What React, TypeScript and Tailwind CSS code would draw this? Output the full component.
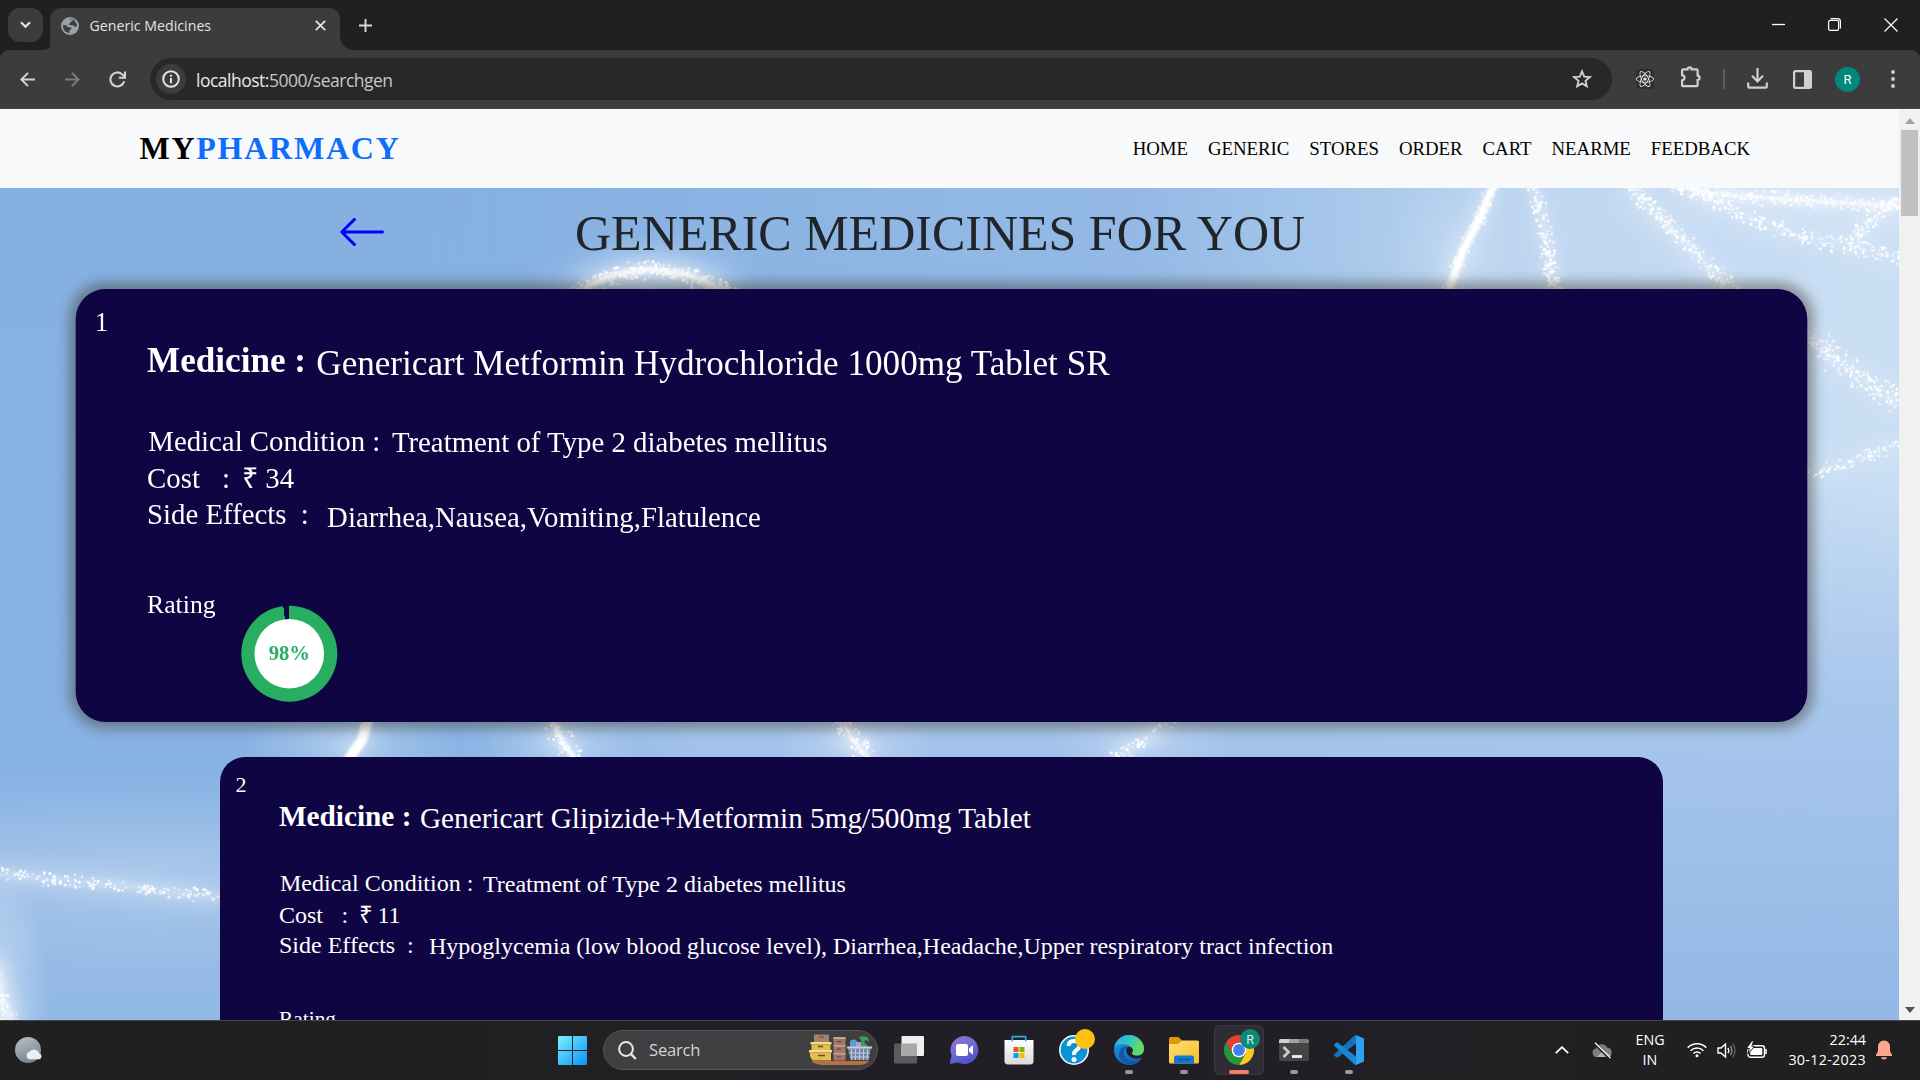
import type { ReactNode } from "react";
import { FaReact } from "react-icons/fa";

type Medicine = {
  name: string;
  condition: string;
  cost: number;
  sideEffects: string;
  rating: number;
};

const medicines: Medicine[] = [
  {
    name: "Genericart Metformin Hydrochloride 1000mg Tablet SR",
    condition: "Treatment of Type 2 diabetes mellitus",
    cost: 34,
    sideEffects: "Diarrhea,Nausea,Vomiting,Flatulence",
    rating: 98,
  },
  {
    name: "Genericart Glipizide+Metformin 5mg/500mg Tablet",
    condition: "Treatment of Type 2 diabetes mellitus",
    cost: 11,
    sideEffects:
      "Hypoglycemia (low blood glucose level), Diarrhea,Headache,Upper respiratory tract infection",
    rating: 96,
  },
];

const navLinks = ["HOME", "GENERIC", "STORES", "ORDER", "CART", "NEARME", "FEEDBACK"];

/* ---------- Backdrop of glowing particle strands ---------- */

type Point = [number, number];
type Strand = { points: Point[]; width: number; dots: number; glow: number; core?: number };

const strands: Strand[] = [
  { points: [[574, 296], [592, 284], [615, 274], [650, 269], [686, 274], [710, 284], [732, 296]], width: 11, dots: 330, glow: 0.9, core: 3 },
  { points: [[1494, 184], [1480, 218], [1464, 248], [1448, 292]], width: 8, dots: 120, glow: 0.7, core: 7 },
  { points: [[1533, 184], [1543, 220], [1550, 262], [1556, 292]], width: 9, dots: 150, glow: 0.5 },
  { points: [[1628, 184], [1662, 220], [1698, 256], [1736, 294]], width: 11, dots: 190, glow: 0.45 },
  { points: [[1672, 184], [1712, 194], [1800, 200], [1899, 206]], width: 9, dots: 270, glow: 0.6, core: 2 },
  { points: [[1690, 190], [1745, 217], [1800, 236], [1855, 248], [1899, 257]], width: 10, dots: 190, glow: 0.25 },
  { points: [[1899, 200], [1870, 222], [1848, 248]], width: 9, dots: 80, glow: 0.3 },
  { points: [[1806, 334], [1835, 360], [1866, 382], [1899, 403]], width: 16, dots: 160, glow: 0.25 },
  { points: [[1806, 476], [1840, 466], [1870, 454], [1899, 444]], width: 9, dots: 75, glow: 0.2 },
  { points: [[369, 716], [362, 740], [348, 760]], width: 5, dots: 20, glow: 0.8, core: 10 },
  { points: [[551, 716], [560, 738], [576, 760]], width: 13, dots: 60, glow: 0.6, core: 3 },
  { points: [[841, 716], [850, 736], [870, 760]], width: 13, dots: 60, glow: 0.6, core: 2 },
  { points: [[1170, 716], [1142, 742], [1110, 760]], width: 11, dots: 50, glow: 0.5 },
  { points: [[-4, 873], [50, 880], [110, 884], [165, 891], [224, 898]], width: 8, dots: 150, glow: 0.6 },
  { points: [[-8, 960], [0, 1000], [12, 1024]], width: 14, dots: 50, glow: 0.9 },
];

function makeRandom(seed: number) {
  let state = seed;
  return () => {
    state = (state * 1664525 + 1013904223) % 4294967296;
    return state / 4294967296;
  };
}

function toPath(points: Point[]) {
  return points.map(([x, y], i) => `${i === 0 ? "M" : "L"}${x} ${y}`).join(" ");
}

function scatter(strand: Strand, seed: number) {
  const random = makeRandom(seed);
  const segments = strand.points.length - 1;
  return Array.from({ length: strand.dots }, () => {
    const t = random() * segments;
    const i = Math.min(Math.floor(t), segments - 1);
    const f = t - i;
    const [x1, y1] = strand.points[i];
    const [x2, y2] = strand.points[i + 1];
    const length = Math.hypot(x2 - x1, y2 - y1) || 1;
    const spread = (random() + random() - 1) * strand.width;
    return {
      x: x1 + (x2 - x1) * f - ((y2 - y1) / length) * spread,
      y: y1 + (y2 - y1) * f + ((x2 - x1) / length) * spread,
      r: 0.9 + random() * 0.8,
      o: 0.45 + random() * 0.5,
    };
  });
}

const glowSpots: [number, number, number, number, number][] = [
  [650, 290, 120, 60, 0.5],
  [160, 885, 330, 100, 0.16],
  [-10, 1010, 60, 160, 0.6],
  [350, 745, 110, 50, 0.4],
  [560, 745, 80, 40, 0.35],
  [855, 745, 80, 40, 0.35],
  [1140, 740, 90, 40, 0.3],
  [1460, 260, 80, 90, 0.25],
  [1780, 200, 190, 60, 0.25],
];

function Backdrop() {
  return (
    <svg className="absolute inset-0 h-full w-full" viewBox="0 188 1899 832" preserveAspectRatio="none" aria-hidden="true">
      <defs>
        <linearGradient id="sky" x1="0" y1="0" x2="1" y2="0">
          <stop offset="0" stopColor="#84afe0" />
          <stop offset="0.35" stopColor="#8ab3e3" />
          <stop offset="0.6" stopColor="#94b9e6" />
          <stop offset="0.7" stopColor="#a6c7ea" />
          <stop offset="0.82" stopColor="#bfd6f1" />
          <stop offset="1" stopColor="#cbdff4" />
        </linearGradient>
        <linearGradient id="horizon" x1="0" y1="0" x2="0" y2="1">
          <stop offset="0" stopColor="#9ec1ea" stopOpacity="0" />
          <stop offset="0.35" stopColor="#9ec1ea" stopOpacity="0" />
          <stop offset="0.62" stopColor="#a6c5ec" stopOpacity="0.95" />
          <stop offset="1" stopColor="#93b8e6" />
        </linearGradient>
        <linearGradient id="low" x1="0" y1="0" x2="0" y2="1">
          <stop offset="0" stopColor="#86b0e1" />
          <stop offset="0.7" stopColor="#88b2e3" />
          <stop offset="0.81" stopColor="#9bbee7" />
          <stop offset="1" stopColor="#92b8e5" />
        </linearGradient>
        <linearGradient id="leftFade" x1="0" y1="0" x2="1" y2="0">
          <stop offset="0" stopColor="#fff" />
          <stop offset="0.6" stopColor="#fff" />
          <stop offset="1" stopColor="#000" />
        </linearGradient>
        <mask id="leftMask">
          <rect x="0" y="188" width="700" height="832" fill="url(#leftFade)" />
        </mask>
        <radialGradient id="spot">
          <stop offset="0" stopColor="#f4f9ff" />
          <stop offset="0.5" stopColor="#f4f9ff" stopOpacity="0.4" />
          <stop offset="1" stopColor="#f4f9ff" stopOpacity="0" />
        </radialGradient>
        <filter id="soft" filterUnits="userSpaceOnUse" x="-60" y="130" width="2040" height="950">
          <feGaussianBlur stdDeviation="10" />
        </filter>
        <filter id="near" filterUnits="userSpaceOnUse" x="-60" y="130" width="2040" height="950">
          <feGaussianBlur stdDeviation="3.5" />
        </filter>
        <filter id="fine" filterUnits="userSpaceOnUse" x="-60" y="130" width="2040" height="950">
          <feGaussianBlur stdDeviation="1.6" />
        </filter>
      </defs>
      <rect x="0" y="188" width="1899" height="832" fill="url(#sky)" />
      <rect x="0" y="188" width="1899" height="832" fill="url(#horizon)" />
      <rect x="0" y="188" width="700" height="832" fill="url(#low)" mask="url(#leftMask)" />
      {glowSpots.map(([cx, cy, rx, ry, o]) => (
        <ellipse key={`${cx}-${cy}`} cx={cx} cy={cy} rx={rx} ry={ry} fill="url(#spot)" opacity={o} />
      ))}
      {strands.map((s, i) => (
        <g key={i} fill="none" strokeLinejoin="round">
          <path d={toPath(s.points)} stroke="#fff" strokeWidth={s.width + 6} opacity={s.glow * 0.6} filter="url(#soft)" />
          <path d={toPath(s.points)} stroke="#fff" strokeWidth={s.width * 0.7} opacity={s.glow * 0.6} filter="url(#near)" />
          {s.core ? <path d={toPath(s.points)} stroke="#fff" strokeWidth={s.core} filter="url(#fine)" /> : null}
          {scatter(s, 97 + i * 131).map((d, j) => (
            <circle key={j} cx={d.x} cy={d.y} r={d.r} fill="#fff" opacity={d.o} />
          ))}
        </g>
      ))}
    </svg>
  );
}

/* ---------- Browser chrome ---------- */

function TabStrip() {
  return (
    <div className="flex h-[50px] items-end bg-[#1f2120]">
      <div className="mb-2 ml-2 flex h-[34px] w-[35px] items-center justify-center rounded-xl bg-[#3c3c3c]">
        <svg width="11" height="8" viewBox="0 0 11 8" fill="none" stroke="#e6e6e6" strokeWidth="2.2">
          <path d="M1 1.2 5.5 5.8 10 1.2" />
        </svg>
      </div>
      <svg width="10" height="10" viewBox="0 0 10 10" className="-mr-[3px] ml-0" fill="#3c3c3c">
        <path d="M10 0v10H0A10 10 0 0 0 10 0Z" />
      </svg>
      <div className="flex h-[42px] w-[290px] items-center rounded-t-[11px] bg-[#3c3c3c] pb-[7px] pl-[11px] pr-[14px]">
        <svg width="18" height="18" viewBox="0 0 18 18">
          <circle cx="9" cy="9" r="9" fill="#9aa0a6" />
          <path
            d="M2.2 7.8 5.6 8.4Q6.6 9 6.6 10.2L9.4 10.3Q10.6 10.6 10.4 12L8.4 13.2V15.9Q3.6 15.5 2.2 11ZM7 2.4 11.6 2.2Q12.4 3 11.6 4.1L9.6 4.4Q8.8 5 9.6 5.8L7.4 7.2Q9.6 8.6 12 8.2L13.4 9.6 15.8 9.4 15.9 8Q15.2 5.6 13.4 4L14 3.6 11 1.6Z"
            fill="#3c3c3c"
          />
        </svg>
        <span className="ml-[10.5px] flex-1 whitespace-nowrap font-['Open_Sans'] text-[14.2px] leading-5 text-[#e3e3e3]">
          Generic Medicines
        </span>
        <svg width="11" height="11" viewBox="0 0 11 11" stroke="#e3e3e3" strokeWidth="1.8">
          <path d="m.8.8 9.400 9.400M10.200.8.8 10.200" />
        </svg>
      </div>
      <svg width="14" height="14" viewBox="0 0 14 14" fill="#3c3c3c">
        <path d="M0 0v14h14A14 14 0 0 1 0 0Z" />
      </svg>
      <svg width="13" height="13" viewBox="0 0 13 13" className="mb-[18px] ml-[5px]" stroke="#d8d8d8" strokeWidth="1.9">
        <path d="M6.5 0v13M0 6.5h13" />
      </svg>
      <div className="ml-auto flex h-full items-center gap-[43px] pr-[22px] pb-[1px]">
        <svg width="13" height="13" viewBox="0 0 13 13" className="-ml-px mr-px" stroke="#fff" strokeWidth="1.3">
          <path d="M0 6.5h13" />
        </svg>
        <svg width="13" height="13" viewBox="0 0 13 13" className="-ml-px" fill="none" stroke="#fff" strokeWidth="1.2">
          <rect x=".6" y="2.4" width="10" height="10" rx="1.6" />
          <path d="M2.600.6h7q2.800 0 2.800 2.800v7" />
        </svg>
        <svg width="14" height="14" viewBox="0 0 14 14" stroke="#fff" strokeWidth="1.2">
          <path d="m.5.5 13 13m0-13-13 13" />
        </svg>
      </div>
    </div>
  );
}

function Toolbar() {
  return (
    <div className="bg-[#1f2120]">
      <div className="flex h-[59px] items-center rounded-t-[9px] border-b border-[#474747] bg-[#3c3c3c]">
        <svg width="15" height="15" viewBox="0 0 15 15" className="ml-5" fill="none" stroke="#d3d3d3" strokeWidth="2">
          <path d="M15 7.5H1.6M8 .9 1.4 7.5 8 14.1" />
        </svg>
        <svg width="15" height="15" viewBox="0 0 15 15" className="ml-[30px]" fill="none" stroke="#7d7d7d" strokeWidth="2">
          <path d="M0 7.5h13.4M7 .9l6.6 6.6L7 14.1" />
        </svg>
        <svg width="17" height="17" viewBox="0 0 17 17" className="ml-[29px]" fill="none" stroke="#d3d3d3" strokeWidth="2.1">
          <path d="M15.2 10.2A7 7 0 1 1 13.5 3.6L15.6 6" />
          <path d="M16 .5v6.2H9.8" />
        </svg>
        <div className="ml-6 flex h-[42px] w-[1462px] items-center rounded-full bg-[#282828] pl-1.5 pr-5">
          <span className="flex h-[30px] w-[30px] items-center justify-center rounded-full bg-[#3c3c3c]">
            <svg width="18" height="18" viewBox="0 0 18 18" fill="none" stroke="#e3e3e3" strokeWidth="2">
              <circle cx="9" cy="9" r="7.8" />
              <path d="M9 8v5.2M9 4.8v1.9" />
            </svg>
          </span>
          <span className="ml-2.5 mt-px whitespace-nowrap font-['Open_Sans'] text-[17.5px] leading-6 tracking-[-0.5px] text-[#c7c7c7]">
            <span className="text-[#e8e8e8]">localhost:</span>5000/searchgen
          </span>
          <svg width="20" height="20" viewBox="0 0 20 20" className="ml-auto" fill="none" stroke="#d0d0d0" strokeWidth="1.9">
            <path d="m10 2.4 2.2 5.2 5.6.5-4.3 3.7 1.3 5.5L10 14.4l-4.8 2.9 1.3-5.5-4.3-3.7 5.6-.5Z" />
          </svg>
        </div>
        <span className="ml-6 flex h-5 w-[18px] items-center justify-center rounded-sm bg-[#2c2e31]">
          <FaReact size={18} color="#f1f1f1" />
        </span>
        <svg width="22" height="22" viewBox="0 0 22 22" className="-mt-1 ml-[26px]" fill="none" stroke="#d0d0d0" strokeWidth="2.2">
          <path d="M2.1 4.6q0-1.2 1.2-1.2H7.6Q7.6 1.4 9.6 1.4T11.6 3.4H16.4q1.2 0 1.2 1.2V9.6q2 .2 2 2.2t-2 2.2v5q0 1.2-1.2 1.2H3.3q-1.2 0-1.2-1.2v-4.6q2.4-.4 2.4-2.6T2.1 9.2Z" />
        </svg>
        <span className="ml-[21px] h-5 w-0.5 bg-[#5e5e5e]" />
        <svg width="21" height="21" viewBox="0 0 21 21" className="-mt-0.5 ml-[22px]" fill="none" stroke="#d0d0d0" strokeWidth="2.2">
          <path d="M10.5 0v13M5 7.8l5.5 5.6L16 7.8M1.2 14.5v4q0 1.2 1.2 1.2h16.2q1.2 0 1.2-1.2v-4" />
        </svg>
        <svg width="19" height="19" viewBox="0 0 19 19" className="ml-[25px]">
          <rect x="1.1" y="1.1" width="16.8" height="16.8" rx="1.4" fill="none" stroke="#d0d0d0" strokeWidth="2.2" />
          <path d="M11 1h7v17h-7Z" fill="#d0d0d0" />
        </svg>
        <span className="ml-[23px] flex h-[25px] w-[25px] items-center justify-center rounded-full bg-[#00897b] font-['Roboto'] text-[13px] leading-none text-white">
          R
        </span>
        <svg width="4" height="18" viewBox="0 0 4 18" className="ml-[31px]" fill="#d0d0d0">
          <circle cx="2" cy="2" r="1.9" />
          <circle cx="2" cy="9" r="1.9" />
          <circle cx="2" cy="16" r="1.9" />
        </svg>
      </div>
    </div>
  );
}

/* ---------- Page ---------- */

function Navbar() {
  return (
    <header className="flex h-[79px] items-center bg-[#f8f9fa] pl-[139.5px] pr-[149px]">
      <span className="-mt-0.5 whitespace-nowrap text-[32px] font-bold leading-10 tracking-[1.75px] text-black [font-kerning:none]">
        MY<span className="text-[#0d6efd]">PHARMACY</span>
      </span>
      <nav className="ml-auto flex gap-5 text-[18.8px] leading-6 text-black">
        {navLinks.map((link) => (
          <a key={link}>{link}</a>
        ))}
      </nav>
    </header>
  );
}

function RatingRing({ value }: { value: number }) {
  const degrees = value * 3.6;
  return (
    <div
      className="flex h-20 w-20 items-center justify-center rounded-full"
      style={{ background: `conic-gradient(#27ae60 ${degrees}deg, #0f0743 ${degrees}deg)` }}
    >
      <div className="flex h-[58px] w-[58px] items-center justify-center rounded-full bg-white pt-px text-[17.2px] font-bold leading-none text-[#27ae60]">
        {value}%
      </div>
    </div>
  );
}

function MedicineCard({ medicine, index, active }: { medicine: Medicine; index: number; active: boolean }) {
  return (
    <article
      className={
        "h-[361px] w-[1443px] shrink-0 rounded-[25px] bg-[#0f0543] pt-3.5 text-2xl leading-[30px] text-white " +
        (active ? "scale-[1.2] shadow-[0_0_10px_5px_rgba(68,66,56,0.48)]" : "")
      }
    >
      <div className="pl-4 text-[22px] leading-7">{index}</div>
      <div className="pl-[59.5px]">
        <div className="flex h-[34px] text-[29.25px] leading-[34px]">
          <span className="w-[141px] font-bold">Medicine :</span>
          <span className="mt-[2.5px] whitespace-nowrap">{medicine.name}</span>
        </div>
        <div className="mt-[35.5px] flex">
          <span className="w-[204px] pl-px">Medical Condition :</span>
          <span className="mt-px whitespace-nowrap">{medicine.condition}</span>
        </div>
        <div className="mt-[0.5px] flex h-[30px]">
          <span className="w-[62.5px]">Cost</span>
          <span className="w-[17px]">:</span>
          <span className="[word-spacing:-1px]">₹ {medicine.cost}</span>
        </div>
        <div className="flex">
          <span className="w-[128px]">Side Effects</span>
          <span className="w-[22px]">:</span>
          <span className="mt-[1.5px] whitespace-nowrap">{medicine.sideEffects}</span>
        </div>
        <div className="mt-[43px] flex">
          <span className="w-[78.500px] text-[21.4px]">Rating</span>
          <div className="mt-4">
            <RatingRing value={medicine.rating} />
          </div>
        </div>
      </div>
    </article>
  );
}

function Page() {
  return (
    <div className="flex flex-1 flex-col overflow-hidden font-['Liberation_Serif',serif]">
      <Navbar />
      <main className="relative h-[832px] overflow-hidden">
        <Backdrop />
        <div className="relative flex h-full flex-col">
          <div className="flex h-[137px] shrink-0 items-start pl-[340px]">
            <svg width="44" height="28" viewBox="0 0 44 28" className="mt-[30px]" fill="none" stroke="#0000ff" strokeWidth="2.9" strokeLinecap="round" strokeLinejoin="round">
              <path d="M42.5 14H1.8M14.5 1.4 1.8 14l12.7 12.6" />
            </svg>
            <h1 className="ml-[191px] mt-[14.5px] whitespace-nowrap text-[50px] leading-[60px] text-[#212529]">
              GENERIC MEDICINES FOR YOU
            </h1>
          </div>
          <div className="flex flex-col gap-[70.5px] pl-[219.5px]">
            {medicines.map((m, i) => (
              <MedicineCard key={m.name} medicine={m} index={i + 1} active={i === 0} />
            ))}
          </div>
        </div>
      </main>
    </div>
  );
}

function ScrollBar() {
  return (
    <div className="flex w-[21px] flex-col items-center bg-[#f1f1f1] pt-[9px] pb-[7px]">
      <svg width="10" height="6" viewBox="0 0 10 6" fill="#a3a3a3">
        <path d="M5 0 10 6H0Z" />
      </svg>
      <div className="mt-1.5 h-[86px] w-[17px] bg-[#c1c1c1]" />
      <svg width="10" height="6" viewBox="0 0 10 6" className="mt-auto" fill="#505050">
        <path d="M5 6 0 0h10Z" />
      </svg>
    </div>
  );
}

/* ---------- Taskbar ---------- */

function TaskIcon({ children, marker, active }: { children: ReactNode; marker?: boolean; active?: boolean }) {
  return (
    <div className="flex h-full w-[55px] items-center justify-center">
      <div
        className={
          "relative flex h-[50px] w-[50px] items-center justify-center rounded-md " +
          (active ? "bg-[#2f2c33] ring-1 ring-inset ring-[#3b383f]" : "")
        }
      >
        {children}
        {active ? <span className="absolute bottom-[1px] h-1 w-5 rounded-full bg-[#f4806a]" /> : null}
        {marker ? <span className="absolute bottom-[1px] h-1 w-2 rounded-full bg-[#9a9a9c]" /> : null}
      </div>
    </div>
  );
}

function WindowsLogo() {
  return (
    <svg width="29" height="29" viewBox="0 0 29 29">
      <defs>
        <linearGradient id="win" x1="0" y1="0" x2="1" y2="1">
          <stop offset="0" stopColor="#7df0ff" />
          <stop offset="0.5" stopColor="#3fc1fb" />
          <stop offset="1" stopColor="#0a93f5" />
        </linearGradient>
      </defs>
      <path
        d="M1.2 0H14v14H0V1.200Q0 0 1.200 0ZM15 0H27.800Q29 0 29 1.200V14H15ZM0 15H14V29H1.200Q0 29 0 27.800ZM15 15H29V27.800Q29 29 27.800 29H15Z"
        fill="url(#win)"
      />
    </svg>
  );
}

function SearchArt() {
  return (
    <svg width="63" height="32" viewBox="0 0 63 32">
      <path d="M2 27H60Q57 31 50 31H15Q6 31 2 27Z" fill="#b86f43" />
      <path d="M5 1.500Q5 .5 6 .5H19Q20 .5 20 1.500V8H5Z" fill="#a77f6c" />
      <path d="M10 3h5" stroke="#5e4033" strokeWidth="1" />
      <rect x="1.500" y="8" width="21" height="2.500" fill="#f6dd84" />
      <rect x="2.500" y="10.500" width="19" height="5.500" fill="#e3bd52" />
      <rect x="0" y="16" width="23" height="2.500" fill="#f6dd84" />
      <path d="M1 18.500H22V26.500H4Q2 25 1 22Z" fill="#e3bd52" />
      <path d="M9 12.500h5M9 21.500h7" stroke="#6b4d17" strokeWidth="1.400" />
      <path d="M24.500 3h12v23.500h-12Z" fill="#a07868" />
      <path d="M24.500 3h12v2h-12ZM24.500 11h12v1.500h-12ZM24.500 19h12v1.500h-12Z" fill="#c9a28e" />
      <path d="M28 7.500h4M28 15h4M28 23h4" stroke="#5e4033" strokeWidth="1" />
      <path d="M41 8Q41 5.500 44.500 5.500T48 8V14H41Z" fill="#5b9bd8" />
      <path d="M50 3Q54 1.500 59 3.500L60 8 56 5.500 55.500 9Q60 11 59 15H52Q51 10 53 8Z" fill="#3f9f61" />
      <path d="M47 8h5v6h-5Z" fill="#b59bdc" />
      <path d="M38.500 13H62L59.500 26H41.500Z" fill="#7287a8" />
      <path d="M38 12.500h25v2h-25Z" fill="#c9cedd" />
      <path d="M42.500 15v11M46.500 15v11M50.500 15v11M54.500 15v11M58.500 15v11M40 19h21M41 23h19.500" stroke="#c3c9dc" strokeWidth="1" />
    </svg>
  );
}

function Taskbar() {
  return (
    <footer className="flex h-[60px] items-center border-t border-[#454545] bg-[linear-gradient(90deg,#202020_0%,#202020_22%,#211f25_40%,#211f25_70%,#202020_85%)] pb-px font-['Open_Sans',sans-serif] text-white">
      <svg width="28" height="27" viewBox="0 0 28 27" className="ml-[15px]">
        <defs>
          <linearGradient id="moon" x1="0" y1="0" x2="0.4" y2="1">
            <stop offset="0" stopColor="#b9c0c9" />
            <stop offset="1" stopColor="#7d8690" />
          </linearGradient>
        </defs>
        <circle cx="13" cy="13" r="13" fill="url(#moon)" />
        <path d="M15 22.300a3.800 3.800 0 0 1-.3-7.500 5.300 5.300 0 0 1 9.400 1.400 3.200 3.200 0 0 1 .4 6.100Z" fill="#eceff2" />
      </svg>

      <div className="ml-[515px]">
        <WindowsLogo />
      </div>

      <div className="ml-4 mr-[3.5px] flex h-10 w-[275px] items-center rounded-full border border-[#565558] bg-[#3f3e41] pl-[14px] pr-[5px]">
        <svg width="19" height="19" viewBox="0 0 19 19" fill="none" stroke="#e8e8e8" strokeWidth="2">
          <circle cx="8" cy="8" r="6.9" />
          <path d="m12.8 12.8 5 5.2" strokeWidth="2.4" />
        </svg>
        <span className="ml-[12px] flex-1 text-[16.6px] leading-6 tracking-[-0.2px] text-[#d4d4d4]">Search</span>
        <SearchArt />
      </div>

      <TaskIcon>
        <svg width="30" height="30" viewBox="0 0 30 30">
          <rect x="0" y="8.5" width="23" height="20" rx="1" fill="#5b5b5b" />
          <rect x="7.5" y="1" width="22.5" height="20" rx="1" fill="#efefef" />
          <path d="M7.500 8.500H23V21H7.500Z" fill="#a9a9a9" />
        </svg>
      </TaskIcon>
      <TaskIcon>
        <svg width="30" height="30" viewBox="0 0 30 30">
          <defs>
            <linearGradient id="chat" x1="0" y1="0" x2="0.5" y2="1">
              <stop offset="0" stopColor="#9a75c2" />
              <stop offset="0.5" stopColor="#6f6fd6" />
              <stop offset="1" stopColor="#5254c8" />
            </linearGradient>
          </defs>
          <path d="M15.500 1a14 14 0 1 1-6.500 26.500L2 28.700Q.7 28.800 1 27.500L2.600 20.500A14 14 0 0 1 15.500 1Z" fill="url(#chat)" />
          <rect x="7" y="9" width="12" height="12" rx="2" fill="#fff" />
          <path d="M20 13.500 24 10.300V19.700L20 16.500Z" fill="#fff" />
        </svg>
      </TaskIcon>
      <TaskIcon>
        <svg width="30" height="30" viewBox="0 0 30 30">
          <defs>
            <linearGradient id="bag" x1="0" y1="0" x2="0" y2="1">
              <stop offset="0" stopColor="#ffffff" />
              <stop offset="1" stopColor="#d9d9d9" />
            </linearGradient>
          </defs>
          <path d="M.5 5H29.500V26Q29.500 29.500 26 29.500H4Q.5 29.500 .5 26Z" fill="url(#bag)" />
          <path d="M8.300 6.500V1.900Q8.300 1.600 8.600 1.600H21.400Q21.700 1.600 21.700 1.900V6.500" fill="none" stroke="#25b2ec" strokeWidth="1.6" />
          <path d="M9.500 12h5v5h-5Z" fill="#f25022" />
          <path d="M15.500 12h5v5h-5Z" fill="#7fba00" />
          <path d="M9.500 18h5v5h-5Z" fill="#00a4ef" />
          <path d="M15.500 18h5v5h-5Z" fill="#ffb900" />
        </svg>
      </TaskIcon>
      <TaskIcon>
        <svg width="42" height="42" viewBox="-6 -6 42 42">
          <circle cx="15" cy="15" r="14.2" fill="#0a94d6" stroke="#f3f8fb" strokeWidth="1.6" />
          <path d="M9.600 11Q9.800 6 15 6T20.400 10.500Q20.400 13.200 17.500 15T15.200 20" fill="none" stroke="#fff" strokeWidth="4" />
          <circle cx="15" cy="24.500" r="2.5" fill="#fff" />
          <circle cx="26" cy="4" r="10" fill="#fdc112" />
        </svg>
      </TaskIcon>
      <TaskIcon marker>
        <svg width="30" height="30" viewBox="0 0 30 30">
          <defs>
            <linearGradient id="edgeTop" x1="0" y1="0" x2="1" y2="0.5">
              <stop offset="0" stopColor="#2aa5e4" />
              <stop offset="0.5" stopColor="#35c4c4" />
              <stop offset="1" stopColor="#6fe04e" />
            </linearGradient>
            <linearGradient id="edgeBody" x1="0" y1="0" x2="0.5" y2="1">
              <stop offset="0" stopColor="#1c9fe6" />
              <stop offset="1" stopColor="#1065bd" />
            </linearGradient>
          </defs>
          <circle cx="15" cy="15" r="15" fill="url(#edgeBody)" />
          <path d="M.3 12.500A15 15 0 0 1 15 0Q24 0 28.300 7.500 30 10.500 30 14 29.700 20.500 23 20.500 17.500 20.300 18.300 17.800 19.800 15.500 18 13 15.500 9.500 10.500 9.300 3.500 9 .3 12.500Z" fill="url(#edgeTop)" />
          <path d="M13 11.500Q8.500 15 10.500 20.500 13.500 27 21.500 26.500 25 26 28 22.500 24 30 15 30 6 29 5 20 5 11.500 13 11.500Z" fill="#1557a6" />
          <path d="M13.500 12Q11 15 13 18.500 16.500 24 24 23.500 28 22.700 28.500 22.600L30 20V15Q29 20.500 23 20.500 17.500 20.300 18.300 17.800 19.800 15 17.500 12.800 15.500 11.200 13.500 12Z" fill="#211f25" />
          <path d="M30 14Q29.500 20.500 23 20.500 17.500 20.300 18.300 17.800L22 10Z" fill="#5cd96b" />
        </svg>
      </TaskIcon>
      <TaskIcon marker>
        <svg width="30" height="30" viewBox="0 0 30 30">
          <defs>
            <linearGradient id="folder" x1="0" y1="0" x2="1" y2="1">
              <stop offset="0" stopColor="#ffdf76" />
              <stop offset="1" stopColor="#f9bd2d" />
            </linearGradient>
          </defs>
          <path d="M0 3.500Q0 2 1.500 2H9.500L13 5.500V9H0Z" fill="#d99a06" />
          <path d="M0 9H9L13 5.500H28.500Q30 5.500 30 7V27Q30 28.500 28.500 28.500H1.500Q0 28.500 0 27Z" fill="url(#folder)" />
          <path d="M5 28.500V22.500Q5 20.500 7 20.500H23Q25 20.500 25 22.500V28.500Z" fill="#1477cf" />
          <path d="M9 24.500h12" stroke="#0b57a3" strokeWidth="1.5" />
        </svg>
      </TaskIcon>
      <TaskIcon active>
        <svg width="42" height="42" viewBox="-6 -6 42 42">
          <path d="M15 0A15 15 0 0 1 28 7.500H15L8.500 18.700 2 7.500A15 15 0 0 1 15 0Z" fill="#e6402f" />
          <path d="M2 7.500 8.500 18.700 15 22.500 15 30A15 15 0 0 1 2 7.500Z" fill="#27963f" />
          <path d="M28 7.500A15 15 0 0 1 15 30L21.500 18.700 15 7.500Z" fill="#fbc91f" />
          <path d="M15 30 20.500 20 8.500 18.700 15 30Z" fill="#27963f" />
          <circle cx="15" cy="15" r="7.3" fill="#fff" />
          <circle cx="15" cy="15" r="5.9" fill="#3f82ee" />
          <circle cx="26" cy="4" r="10" fill="#0b8a78" />
          <text x="26" y="8.7" fontSize="12.5" fontFamily="Roboto, sans-serif" textAnchor="middle" fill="#d5efea">
            R
          </text>
        </svg>
      </TaskIcon>
      <TaskIcon marker>
        <svg width="30" height="30" viewBox="0 0 30 30">
          <path d="M0 8H30V24.500Q30 26 28.500 26H1.500Q0 26 0 24.500Z" fill="#454545" />
          <path d="M0 5.500Q0 4 1.500 4H10V8H0Z" fill="#d0d0d0" />
          <path d="M10 4H20V8H10Z" fill="#a2a2a2" />
          <path d="M20 4H28.500Q30 4 30 5.500V8H20Z" fill="#7c7c7c" />
          <path d="m4.500 12 5 5-5 5" fill="none" stroke="#c8c8c8" strokeWidth="2.8" />
          <path d="M13 21.500H23" stroke="#f2f2f2" strokeWidth="2.8" />
        </svg>
      </TaskIcon>
      <TaskIcon marker>
        <svg width="30" height="30" viewBox="0 0 30 30">
          <path d="M22 0 30 3.500V26.500L22 30Z" fill="#2ba3f2" />
          <path d="M22 0V8.500L4 22.300Q3 23 2.100 22.300L.5 20.800Q-.4 20 .5 19.100L20.500.6Q21.200 0 22 0Z" fill="#1274bd" />
          <path d="M22 30V21.500L4 7.700Q3 7 2.100 7.700L.5 9.200Q-.4 10 .5 10.900L20.500 29.400Q21.200 30 22 30Z" fill="#1b86d2" />
        </svg>
      </TaskIcon>

      <div className="ml-auto flex items-center pr-[27px]">
        <svg width="14" height="8" viewBox="0 0 14 8" fill="none" stroke="#fff" strokeWidth="1.8">
          <path d="M.8 7.200 7 1.200 13.200 7.200" />
        </svg>
        <svg width="20" height="17" viewBox="0 0 20 17" className="ml-[23px]">
          <path d="M4.500 15A4.300 4.300 0 0 1 4 6.500 6 6 0 0 1 15 5.500 4.800 4.800 0 0 1 15.800 15Z" fill="#7d7d7d" />
          <path d="M4.500 15 12 8.500 19 13.500 15.800 15Z" fill="#b5b5b5" />
          <path d="M2 .8 18 16.500" stroke="#202020" strokeWidth="3" />
          <path d="M3 .8 18.500 16" stroke="#fff" strokeWidth="1.2" />
        </svg>
        <div className="ml-[23px] flex w-[30px] flex-col items-center text-[14.3px] leading-5">
          <span>ENG</span>
          <span>IN</span>
        </div>
        <svg width="20" height="16" viewBox="0 0 20 16" className="ml-[22px]" fill="none" stroke="#fff" strokeWidth="1.5">
          <path d="M.7 5.600a13.200 13.200 0 0 1 18.600 0M3.600 8.700a9 9 0 0 1 12.800 0M6.400 11.500a5 5 0 0 1 7.200 0" />
          <circle cx="10" cy="13.700" r="1.5" fill="#fff" stroke="none" />
        </svg>
        <svg width="20" height="17" viewBox="0 0 20 17" className="ml-2.5" fill="none" strokeWidth="1.4">
          <path d="M1 6H4L8.500 2V15L4 11H1Z" stroke="#fff" />
          <path d="M11 5.800q1.500 2.700 0 5.400" stroke="#fff" />
          <path d="M13.500 3.800q2.700 4.700 0 9.400" stroke="#8a8a8a" />
          <path d="M16 1.800q4 6.700 0 13.400" stroke="#5c5c5c" />
        </svg>
        <svg width="21" height="18" viewBox="0 0 21 18" className="ml-2.5">
          <rect x="1" y="4.7" width="16.5" height="11.6" rx="2.6" fill="none" stroke="#fff" strokeWidth="1.4" />
          <rect x="3.2" y="7" width="12.1" height="7" rx="1" fill="#fff" />
          <path d="M18.300 8h1.500v5h-1.500Z" fill="#fff" />
          <path d="M5-.5-.5 7.500H2.300L1 13 7.500 5.200H4.800L6.500.5Z" fill="#fff" stroke="#202020" strokeWidth="1" />
        </svg>
        <div className="ml-[20px] flex w-[78px] flex-col items-end text-[14.3px] leading-5">
          <span>22:44</span>
          <span className="whitespace-nowrap tracking-[0.3px]">30-12-2023</span>
        </div>
        <svg width="16" height="20" viewBox="0 0 16 20" className="ml-2.5 mr-px" fill="#fda78a">
          <path d="M8 .5Q14 1 14 7V11L16 15V16H0V15L2 11V7Q2 1 8 .5Z" />
          <path d="M5 17.200h6Q10.500 19.500 8 19.500T5 17.200Z" />
        </svg>
      </div>
    </footer>
  );
}

export default function App() {
  return (
    <div className="flex h-[1080px] w-[1920px] flex-col overflow-hidden bg-[#202020]">
      <TabStrip />
      <Toolbar />
      <div className="flex h-[911px] shrink-0">
        <Page />
        <ScrollBar />
      </div>
      <Taskbar />
    </div>
  );
}
